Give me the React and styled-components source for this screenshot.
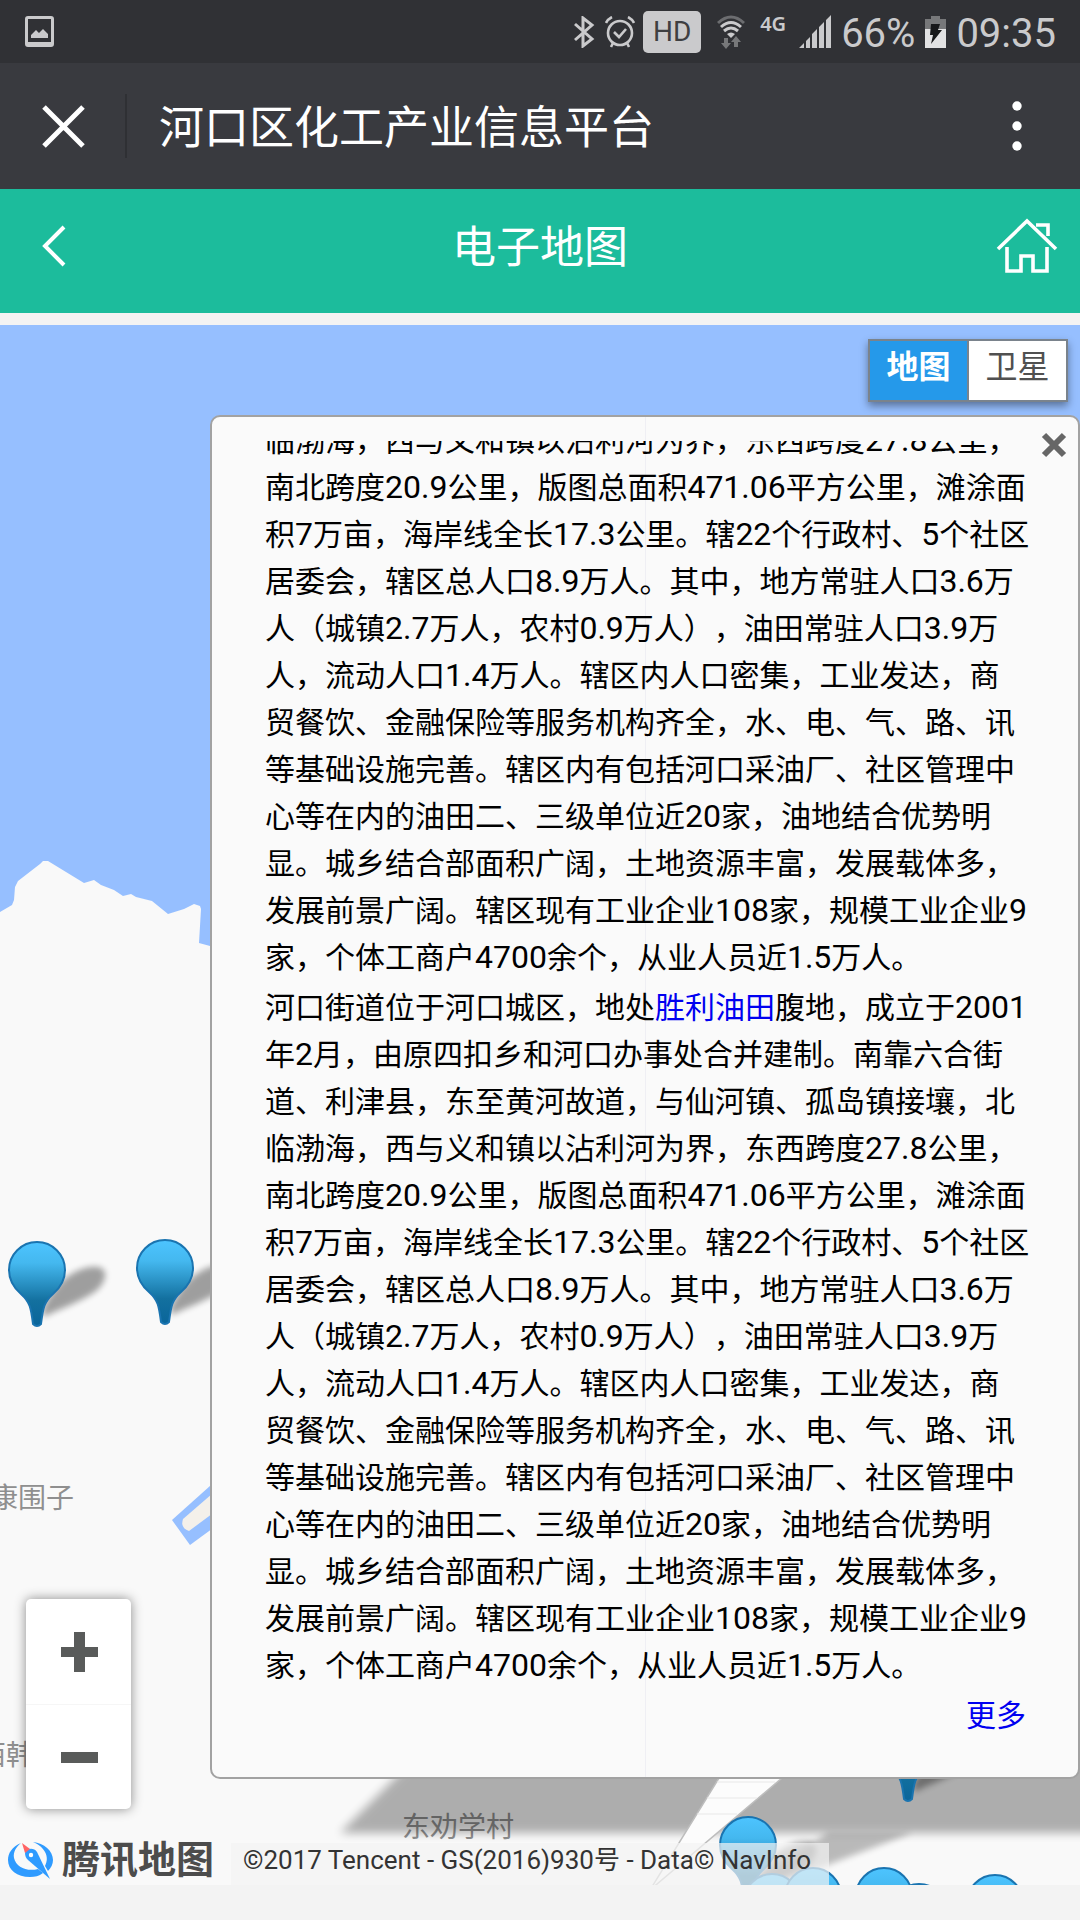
import React from "react";
import styled, { createGlobalStyle } from "styled-components";

const GlobalStyle = createGlobalStyle`
  * { box-sizing: border-box; }
  body {
    margin: 0;
    background: #f3f3f3;
    font-family: Roboto, "Noto Sans CJK SC", sans-serif;
  }
  button {
    margin: 0;
    padding: 0;
    border: 0;
    background: none;
    font: inherit;
    color: inherit;
    cursor: pointer;
  }
  svg { display: block; flex: none; }
`;

const Page = styled.div`
  display: flex;
  flex-direction: column;
  min-height: 100vh;
`;

/* ---------- status bar ---------- */

const StatusBar = styled.div`
  display: flex;
  align-items: center;
  justify-content: space-between;
  height: 63px;
  padding: 0 24px 0 25px;
  background: #303135;
  color: #cacacc;
`;

const StatusGroup = styled.div`
  display: flex;
  align-items: center;
  gap: 10px;
`;

const StatusText = styled.span`
  font-size: 40px;
  line-height: 48px;
  padding-top: 4px;
`;

const Network = styled.span`
  align-self: flex-start;
  padding: 6px 3px 0 5px;
  font: 600 20px/24px "Noto Sans", sans-serif;
`;

const HdBadge = styled.span`
  display: flex;
  align-items: center;
  justify-content: center;
  width: 58px;
  height: 42px;
  margin: 0 6px 0 -2px;
  border-radius: 5px;
  background: #cacacc;
  color: #3e3f42;
  font-size: 28px;
`;

/* ---------- title bars ---------- */

const TitleBar = styled.header`
  display: flex;
  align-items: center;
  height: 126px;
  padding: 0 54px 0 38px;
  background: #393a3f;
  color: #fff;
`;

const Divider = styled.span`
  width: 2px;
  height: 64px;
  margin: 0 32px 0 36px;
  background: #2f3034;
`;

const AppTitle = styled.h1`
  flex: 1;
  margin: 0;
  padding-top: 6px;
  font-size: 45px;
  font-weight: 400;
  line-height: 64px;
`;

const NavBar = styled.nav`
  display: flex;
  align-items: center;
  justify-content: space-between;
  height: 124px;
  padding: 0 22px 10px 22px;
  background: #1cbc9c;
  color: #fff;
`;

const NavTitle = styled.h2`
  margin: 0;
  padding-top: 4px;
  font-size: 44px;
  font-weight: 400;
  line-height: 64px;
`;

const NavSlot = styled.span`
  display: flex;
  width: 64px;
  justify-content: ${(p) => (p.$end ? "flex-end" : "center")};
`;

/* ---------- map ---------- */

const MapArea = styled.main`
  position: relative;
  flex: 1;
  min-height: 720px;
  margin: 12px 0 35px;
  overflow: hidden;
  background: #f9f9f9;
`;

const MapLayer = styled.svg`
  position: absolute;
  inset: 0;
  width: 100%;
  height: 100%;
`;

const PlaceLabel = styled.span`
  position: absolute;
  left: ${(p) => p.$x}px;
  top: ${(p) => p.$y}px;
  font-size: 28px;
  line-height: 40px;
  color: #8f8f8f;
  white-space: nowrap;
`;

const PinSvg = styled.svg`
  position: absolute;
  left: ${(p) => p.$x}px;
  top: ${(p) => p.$y}px;
  overflow: visible;
`;

const TypeSwitch = styled.div`
  position: absolute;
  top: 14px;
  right: 12px;
  display: flex;
  border: 2px solid #7a838c;
  background: #7a838c;
  gap: 2px;
  box-shadow: 0 4px 8px rgba(0, 0, 0, 0.4);
`;

const TypeButton = styled.button`
  width: 97px;
  height: 59px;
  padding-bottom: 7px;
  background: ${(p) => (p.$active ? "#2599ea" : "#fff")};
  color: ${(p) => (p.$active ? "#fff" : "#505050")};
  font-size: 32px;
  font-weight: ${(p) => (p.$active ? 700 : 400)};
  line-height: 48px;
`;

const InfoPanel = styled.section`
  position: absolute;
  top: 90px;
  right: 0;
  bottom: 106px;
  left: 210px;
  display: flex;
  padding: 24px 44px 38px 53px;
  border: 2px solid #a2a2a2;
  border-radius: 10px;
  background: linear-gradient(#efeff4, #efeff4) 433px 0 / 1px 100% no-repeat #fafafa;
`;

const PanelBody = styled.div`
  display: flex;
  flex: 1;
  flex-direction: column;
  justify-content: flex-end;
  gap: 3px;
  overflow: hidden;
  color: #000;
  font-size: 30px;
  line-height: 47px;
`;

const Paragraph = styled.p`
  margin: 0;
  text-spacing-trim: space-all;
`;

const Line = styled.span`
  display: block;
`;

const Figure = styled.span`
  font-size: 32px;
  line-height: 1;
`;

const TextLink = styled.a`
  color: #0000f0;
  text-decoration: none;
`;

const MoreLink = styled(TextLink)`
  align-self: flex-end;
  margin-right: 8px;
`;

const CloseButton = styled.button`
  position: absolute;
  top: 13px;
  right: 9px;
`;

const ZoomControl = styled.div`
  position: absolute;
  left: 26px;
  bottom: 76px;
  display: flex;
  flex-direction: column;
  border-radius: 5px;
  background: #fff;
  box-shadow: 0 0 12px rgba(0, 0, 0, 0.45);
`;

const ZoomButton = styled.button`
  display: flex;
  align-items: center;
  justify-content: center;
  width: 105px;
  height: 105px;
  padding-left: 3px;
  & + & { border-top: 1px solid #f6f6f6; }
`;

const MapFooter = styled.footer`
  position: absolute;
  left: 0;
  bottom: 0;
  display: flex;
  align-items: center;
  height: 50px;
`;

const Brand = styled.a`
  display: flex;
  align-items: center;
  gap: 8px;
  width: 231px;
  padding-left: 7px;
  color: #4c4c4c;
  font-size: 38px;
  font-weight: 700;
  line-height: 48px;
  text-decoration: none;
  white-space: nowrap;
`;

const Copyright = styled.small`
  align-self: flex-end;
  padding: 0 18px 8px 12px;
  background: rgba(244, 244, 244, 0.7);
  color: #333;
  font-size: 26px;
  line-height: 34px;
  white-space: nowrap;
`;

/* ---------- icons ---------- */

const PhotoIcon = () => (
  <svg width="29" height="31" viewBox="0 0 29 31">
    <path fillRule="evenodd" fill="#cacacc" d="M3 0h23a3 3 0 0 1 3 3v25a3 3 0 0 1-3 3H3a3 3 0 0 1-3-3V3a3 3 0 0 1 3-3zM3 3v23h23V3zM6 22v-3l5-5 3 3 4-4 5 5v4z" />
  </svg>
);

const BluetoothIcon = () => (
  <svg width="22" height="32" viewBox="0 0 22 32" fill="none" stroke="#cacacc" strokeWidth="3">
    <path d="M2 8l17 15-9 7V2l9 7L2 24" />
  </svg>
);

const AlarmIcon = () => (
  <svg width="30" height="32" viewBox="0 0 30 32" fill="none" stroke="#cacacc" strokeWidth="2.6">
    <circle cx="15" cy="17" r="12" />
    <path d="M9 16l5 5 7-8M1 7q2-4 6-6M29 7q-2-4-6-6M8 27l-2 4M22 27l2 4" />
  </svg>
);

const WifiIcon = () => (
  <svg width="28" height="34" viewBox="0 0 28 34" fill="none" strokeWidth="3">
    <path stroke="#6c6d70" d="M1 8q13-12 26 0" />
    <path stroke="#cacacc" d="M4 12q10-9 20 0M7 16q7-6 14 0" />
    <path fill="#cacacc" d="M10 19q4-3 8 0l-4 4z" />
    <path fill="#77787a" d="M7 23h4v5h3l-5 6-5-6h3zM17 32h4v-5h3l-5-6-5 6h3z" />
  </svg>
);

const SignalIcon = () => (
  <svg width="32" height="34" viewBox="0 0 32 34" fill="#cacacc">
    <path d="M0 33l5-5v5zM7 26l4-4v11H7zM13 19l5-5v19h-5zM20 12l5-5v26h-5zM27 5l5-5v33h-5z" />
  </svg>
);

const BatteryIcon = () => (
  <svg width="21" height="32" viewBox="0 0 21 32">
    <path fill="#77787a" d="M6 0h9v3h6v10H0V3h6z" />
    <path fill="#e2e2e3" d="M0 13h21v19H0z" />
    <path fill="#17181a" d="M6 8h9l-2 6h4L6 28l2-9H5z" />
  </svg>
);

const CrossIcon = () => (
  <svg width="51" height="51" viewBox="0 0 51 51" stroke="#fff" strokeWidth="5">
    <path d="M6 6l39 39M45 6L6 45" />
  </svg>
);

const DotsIcon = () => (
  <svg width="18" height="52" viewBox="0 0 18 52" fill="#fff">
    <circle cx="9" cy="6" r="4.7" />
    <circle cx="9" cy="26" r="4.7" />
    <circle cx="9" cy="46" r="4.7" />
  </svg>
);

const BackIcon = () => (
  <svg width="24" height="42" viewBox="0 0 24 42" fill="none" stroke="#fff" strokeWidth="4">
    <path d="M22 2L3 21l19 19" />
  </svg>
);

const HomeIcon = () => (
  <svg width="62" height="56" viewBox="0 0 62 56" fill="none" stroke="#fff" strokeWidth="3.6">
    <path d="M2 31L31 3l29 28M40 7h12v11M11 29v24h14V38h12v15h14V29" />
  </svg>
);

const PanelCloseIcon = () => (
  <svg width="30" height="30" viewBox="0 0 30 30" stroke="#666" strokeWidth="6">
    <path d="M5 5l20 20M25 5L5 25" />
  </svg>
);

const PlusIcon = () => (
  <svg width="38" height="40" viewBox="0 0 38 40" fill="#595b5a">
    <path d="M13 0h11v15h13v10H24v15H13V25H0V15h13z" />
  </svg>
);

const MinusIcon = () => (
  <svg width="38" height="11" viewBox="0 0 38 11" fill="#595b5a">
    <path d="M0 0h37v11H0z" />
  </svg>
);

const BrandIcon = () => (
  <svg width="47" height="40" viewBox="0 0 47 40">
    <path fill="#2f9bff" d="M14 3C5 7 1 13 1 20c0 10 9 17 22 17 5 0 9-1 13-4l-5-4c-11 3-22-2-24-11C6 12 9 7 14 3zM26 2c11 1 20 9 20 18 0 4-2 8-5 11l-3-5c5-9 0-19-12-24z" />
    <path fill="#2f9bff" d="M18 13c1-5 9-6 12-1l13 27-22-19c-2-2-3-4-3-7z" />
    <circle cx="24" cy="15" r="2.2" fill="#fff" />
    <path fill="#ff6464" d="M15 3l8 6-5 4z" />
  </svg>
);

/* ---------- map contents ---------- */

const PINS = [
  { x: 8, y: 916 },
  { x: 136, y: 914 },
  { x: 879, y: 1391 },
  { x: 719, y: 1491 },
  { x: 743, y: 1548 },
  { x: 784, y: 1542 },
  { x: 890, y: 1558 },
  { x: 855, y: 1542 },
  { x: 966, y: 1549 },
];

const Pin = ({ x, y }) => (
  <PinSvg $x={x} $y={y} width="58" height="86" viewBox="0 0 58 86" aria-hidden="true">
    <path
      d="M34 70C48 36 74 24 90 26c12 2 8 18-5 26C66 64 48 69 36 76z"
      fill="#000"
      opacity="0.36"
      filter="url(#soft)"
    />
    <path
      d="M29 1a28 28 0 0 1 28 28c0 11-5 18-12 24-9 8-10 14-12 30q-4 4-8 0c-2-16-3-22-12-30C6 47 1 40 1 29A28 28 0 0 1 29 1z"
      fill="url(#pinFill)"
      stroke="#1a74b0"
      strokeWidth="2"
    />
  </PinSvg>
);

const Terrain = () => (
  <MapLayer aria-hidden="true">
    <defs>
      <linearGradient id="pinFill" x1="0" y1="0" x2="0" y2="1">
        <stop offset="0" stopColor="#4dc4ff" />
        <stop offset="0.25" stopColor="#44b8ef" />
        <stop offset="0.7" stopColor="#13709f" />
        <stop offset="1" stopColor="#0a659a" />
      </linearGradient>
      <filter id="soft" x="-30%" y="-30%" width="160%" height="160%">
        <feGaussianBlur stdDeviation="3" />
      </filter>
      <filter id="softer" x="-10%" y="-60%" width="120%" height="220%">
        <feGaussianBlur stdDeviation="5" />
      </filter>
    </defs>
    <rect width="100%" height="630" fill="#96bfff" />
    <path
      fill="#f9f9f9"
      d="M0 587l12-7 2-5 1-13 3-6 22-17 3-3h5l36 22 10-3 7 5 13 5 9 6 8-2 5 3 16 4 16 13 16-5 10-5 6 2 1 3-2 34 11 3h2000v30H0z"
    />
    <path fill="#96bfff" d="M172 1195l48-43v46l-30 22z" />
    <path fill="#f4f0ea" d="M183 1194l37-32v21l-31 23q-9-3-6-12z" />
  </MapLayer>
);

const PanelShadow = () => (
  <MapLayer aria-hidden="true">
    <path filter="url(#softer)" fill="#000" opacity="0.3" d="M340 1508l110-110h700v110z" />
    <path filter="url(#soft)" fill="#000" opacity="0.25" d="M828 1508h84L774 1560h-30z" />
  </MapLayer>
);

const PanelTail = () => (
  <MapLayer aria-hidden="true">
    <path fill="#fcfcfc" stroke="#bdbdbd" strokeWidth="1.5" d="M719 1453l-69 112 132-112z" />
    <path stroke="#e8e8e8" d="M717 1457h58M707 1473h50M697 1489h40" />
  </MapLayer>
);

/* ---------- panel text ---------- */

const DISTRICT = [
  "临渤海，西与义和镇以沾利河为界，东西跨度27.8公里，",
  "南北跨度20.9公里，版图总面积471.06平方公里，滩涂面",
  "积7万亩，海岸线全长17.3公里。辖22个行政村、5个社区",
  "居委会，辖区总人口8.9万人。其中，地方常驻人口3.6万",
  "人（城镇2.7万人，农村0.9万人），油田常驻人口3.9万",
  "人，流动人口1.4万人。辖区内人口密集，工业发达，商",
  "贸餐饮、金融保险等服务机构齐全，水、电、气、路、讯",
  "等基础设施完善。辖区内有包括河口采油厂、社区管理中",
  "心等在内的油田二、三级单位近20家，油地结合优势明",
  "显。城乡结合部面积广阔，土地资源丰富，发展载体多，",
  "发展前景广阔。辖区现有工业企业108家，规模工业企业9",
  "家，个体工商户4700余个，从业人员近1.5万人。",
];

const INTRO = [
  "年2月，由原四扣乡和河口办事处合并建制。南靠六合街",
  "道、利津县，东至黄河故道，与仙河镇、孤岛镇接壤，北",
];

const RichText = ({ text }) =>
  text
    .split(/([\d.]+)/)
    .map((part, i) => (i % 2 ? <Figure key={i}>{part}</Figure> : part));

const Lines = ({ items }) =>
  items.map((text) => (
    <Line key={text}>
      <RichText text={text} />
    </Line>
  ));

export default function App() {
  return (
    <Page>
      <GlobalStyle />
      <StatusBar>
        <PhotoIcon />
        <StatusGroup>
          <BluetoothIcon />
          <AlarmIcon />
          <HdBadge>HD</HdBadge>
          <WifiIcon />
          <Network>4G</Network>
          <SignalIcon />
          <StatusText>66%</StatusText>
          <BatteryIcon />
          <StatusText>09:35</StatusText>
        </StatusGroup>
      </StatusBar>

      <TitleBar>
        <button aria-label="关闭"><CrossIcon /></button>
        <Divider />
        <AppTitle>河口区化工产业信息平台</AppTitle>
        <button aria-label="菜单"><DotsIcon /></button>
      </TitleBar>

      <NavBar>
        <NavSlot>
          <button aria-label="返回"><BackIcon /></button>
        </NavSlot>
        <NavTitle>电子地图</NavTitle>
        <NavSlot $end>
          <a href="#home" aria-label="首页"><HomeIcon /></a>
        </NavSlot>
      </NavBar>

      <MapArea>
        <Terrain />
        <PlaceLabel $x={-10} $y={1154}>康围子</PlaceLabel>
        <PlaceLabel $x={-22} $y={1411}>西韩</PlaceLabel>
        <PlaceLabel $x={402} $y={1483}>东劝学村</PlaceLabel>
        <PanelShadow />
        <PanelTail />
        {PINS.map((pin) => (
          <Pin key={`${pin.x}-${pin.y}`} {...pin} />
        ))}

        <TypeSwitch>
          <TypeButton $active aria-pressed="true">地图</TypeButton>
          <TypeButton aria-pressed="false">卫星</TypeButton>
        </TypeSwitch>

        <InfoPanel>
          <PanelBody>
            <Paragraph>
              <Lines items={DISTRICT} />
            </Paragraph>
            <Paragraph>
              <Line>
                河口街道位于河口城区，地处
                <TextLink href="#oilfield">胜利油田</TextLink>
                <RichText text="腹地，成立于2001" />
              </Line>
              <Lines items={INTRO} />
              <Lines items={DISTRICT} />
            </Paragraph>
            <MoreLink href="#more">更多</MoreLink>
          </PanelBody>
          <CloseButton aria-label="关闭详情"><PanelCloseIcon /></CloseButton>
        </InfoPanel>

        <ZoomControl>
          <ZoomButton aria-label="放大"><PlusIcon /></ZoomButton>
          <ZoomButton aria-label="缩小"><MinusIcon /></ZoomButton>
        </ZoomControl>

        <MapFooter>
          <Brand href="#tencent-map">
            <BrandIcon />
            腾讯地图
          </Brand>
          <Copyright>©2017 Tencent - GS(2016)930号 - Data© NavInfo</Copyright>
        </MapFooter>
      </MapArea>
    </Page>
  );
}
